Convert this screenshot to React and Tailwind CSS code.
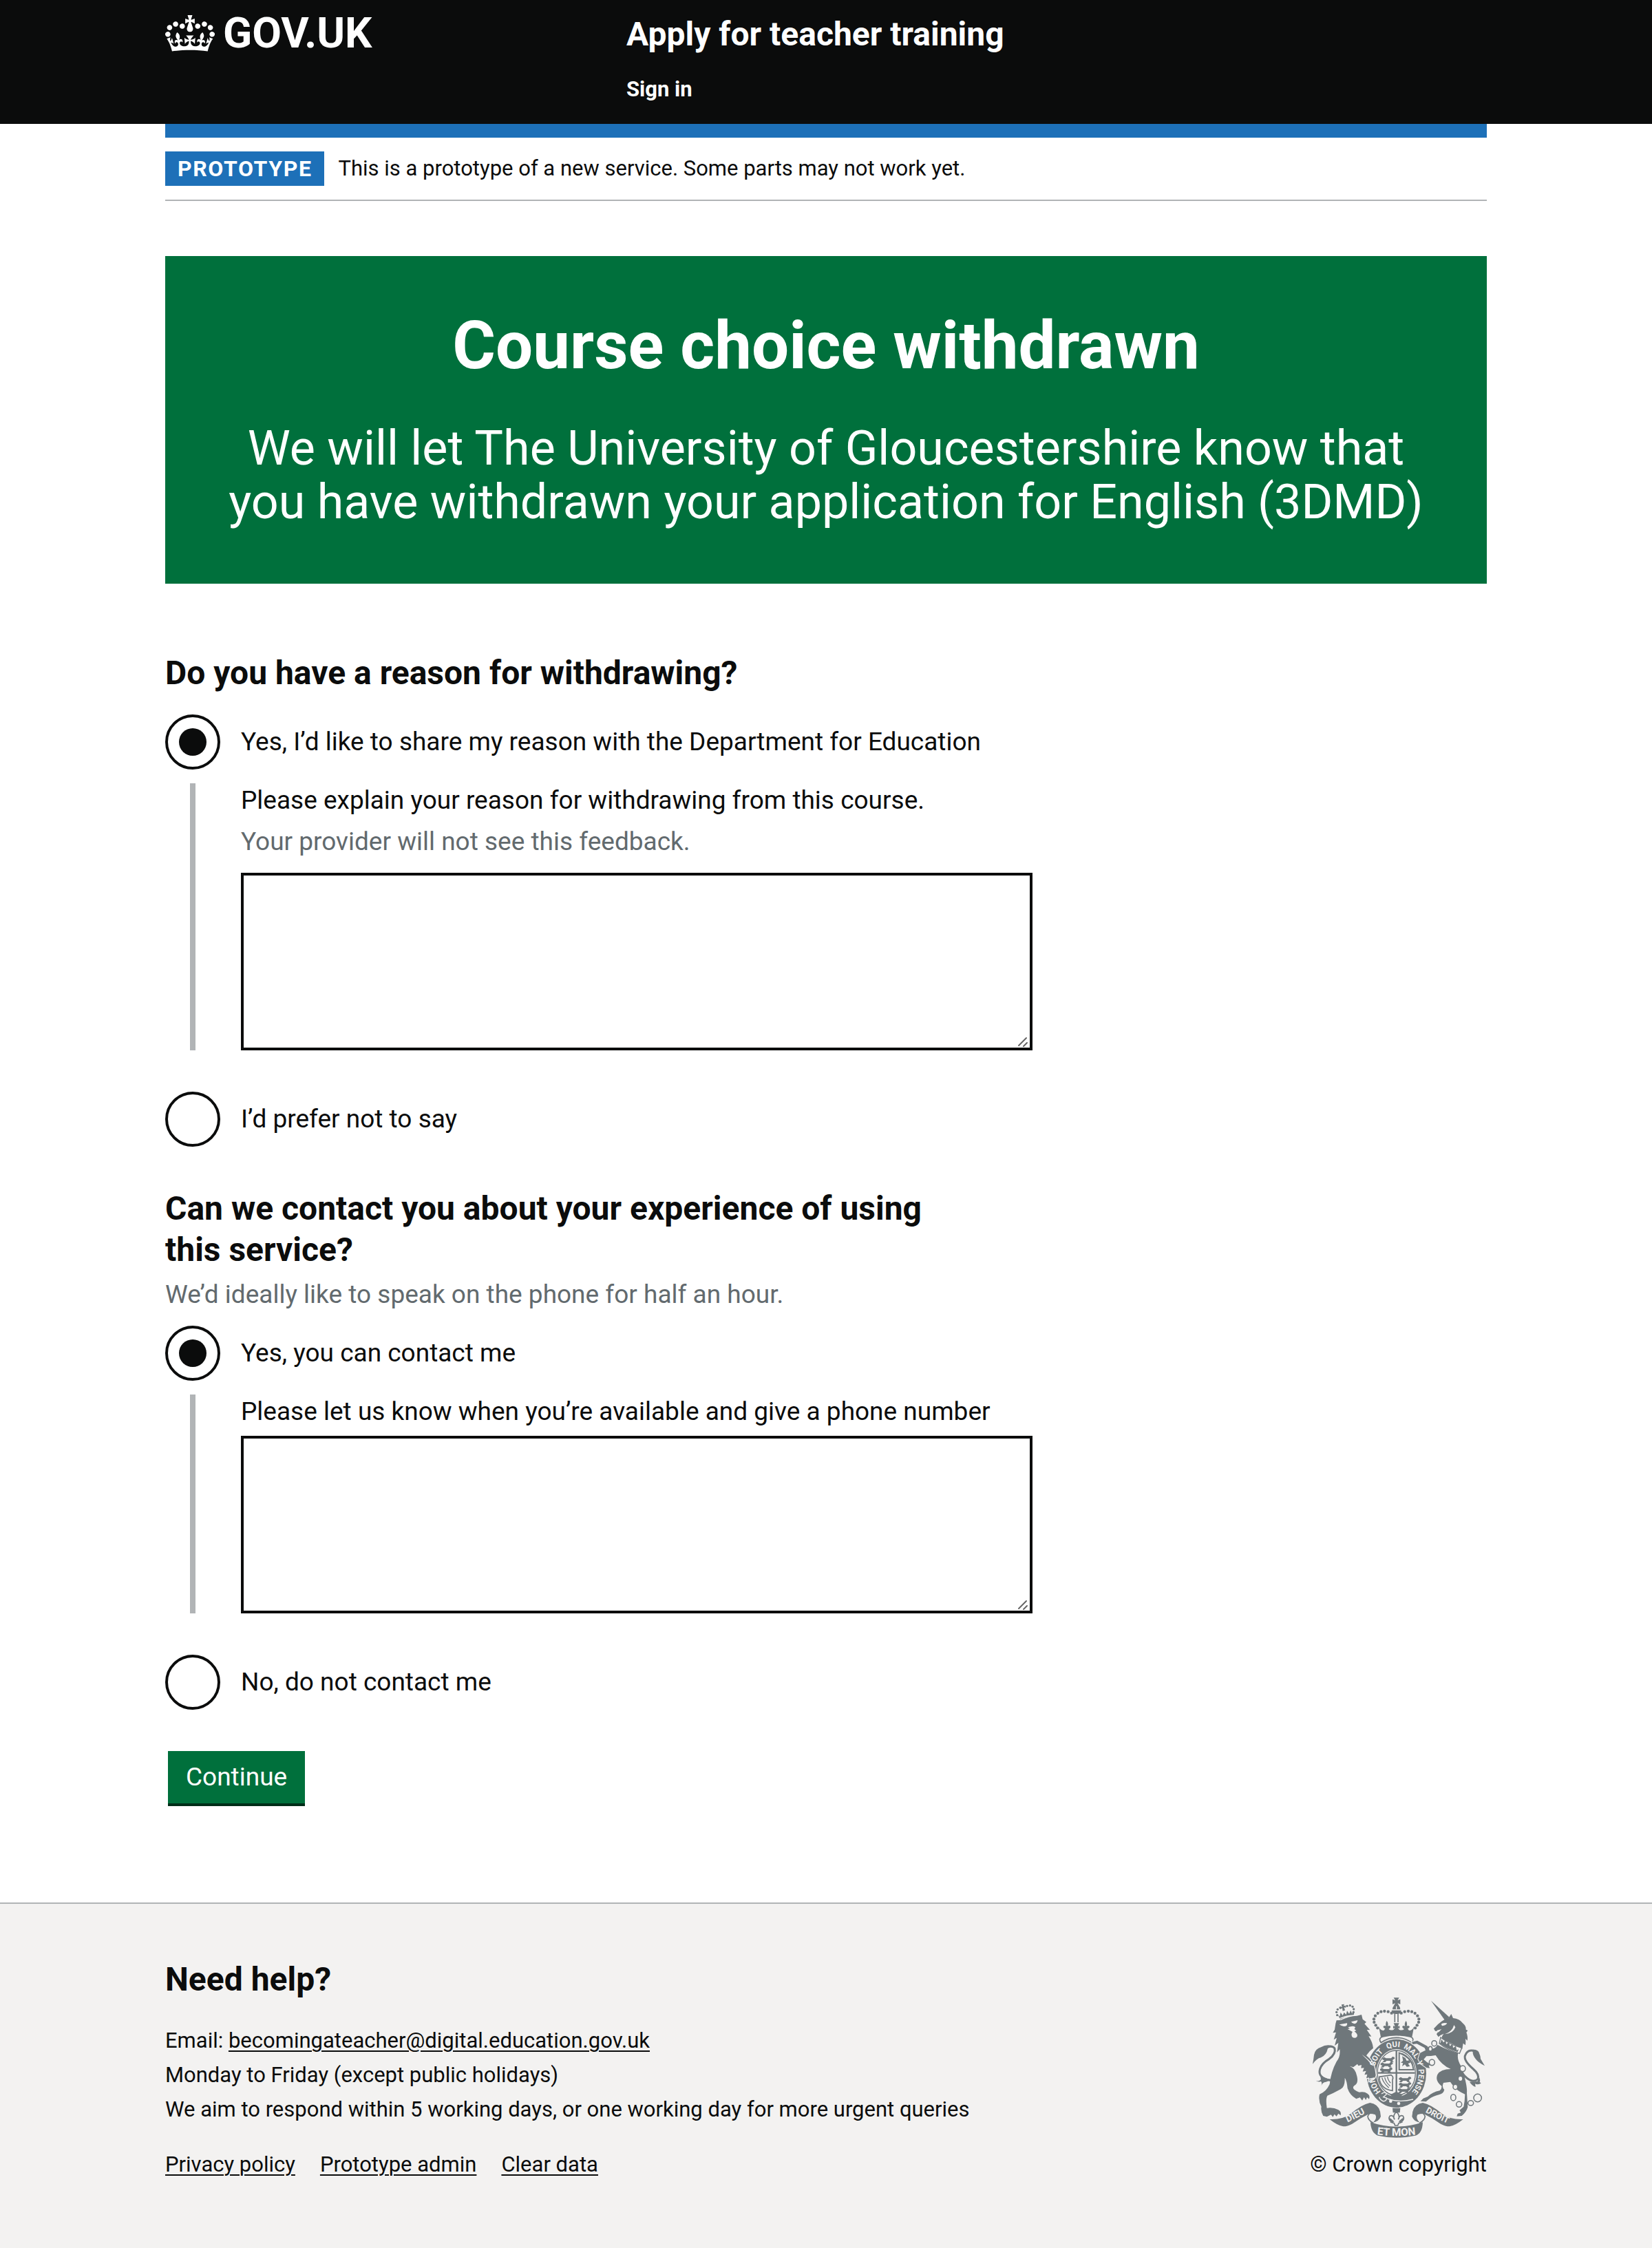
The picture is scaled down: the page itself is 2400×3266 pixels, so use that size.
import React from "react";

const INK = "#6f777b";
const PAPER = "#f3f2f1";

function CrownLogo() {
  return (
    <svg aria-hidden="true" viewBox="0 0 132 97" className="h-[53px] w-[72px] shrink-0" fill="currentColor">
      <path
        fillRule="evenodd"
        d="M25 30.2c3.5 1.5 7.7-.2 9.1-3.7 1.5-3.6-.2-7.8-3.9-9.2-3.6-1.4-7.6.3-9.1 3.9-1.4 3.5.3 7.5 3.9 9zM9 39.5c3.6 1.5 7.8-.2 9.2-3.7 1.5-3.6-.2-7.8-3.9-9.1-3.6-1.5-7.6.2-9.1 3.8-1.4 3.5.3 7.5 3.8 9zM4.4 57.2c3.5 1.5 7.7-.2 9.1-3.8 1.5-3.6-.2-7.7-3.9-9.1-3.5-1.5-7.6.3-9.1 3.8-1.4 3.5.3 7.6 3.9 9.1zm38.3-21.4c3.5 1.5 7.7-.2 9.1-3.8 1.5-3.6-.2-7.7-3.9-9.1-3.6-1.5-7.6.3-9.1 3.8-1.3 3.6.4 7.7 3.9 9.1zm64.4-5.6c-3.6 1.5-7.8-.2-9.1-3.7-1.5-3.6.2-7.8 3.8-9.2 3.6-1.4 7.7.3 9.2 3.9 1.3 3.5-.4 7.5-3.9 9zm15.9 9.3c-3.6 1.5-7.7-.2-9.1-3.7-1.5-3.6.2-7.8 3.7-9.1 3.6-1.5 7.7.2 9.2 3.8 1.5 3.5-.3 7.5-3.8 9zm4.7 17.7c-3.6 1.5-7.8-.2-9.2-3.8-1.5-3.6.2-7.7 3.9-9.1 3.6-1.5 7.7.3 9.2 3.8 1.3 3.5-.4 7.6-3.9 9.1zM89.3 35.8c-3.6 1.5-7.8-.2-9.2-3.8-1.4-3.6.2-7.7 3.9-9.1 3.6-1.5 7.7.3 9.2 3.8 1.4 3.6-.3 7.7-3.9 9.1zM69.7 17.7l8.9 4.7V9.3l-8.9 2.8c-.2-.3-.5-.6-.9-.9L72.4 0H59.6l3.5 11.2c-.3.3-.6.5-.9.9l-8.8-2.8v13.1l8.8-4.7c.3.3.6.7.9.9l-5 15.4v.1c-.2.8-.4 1.6-.4 2.4 0 4.1 3.1 7.5 7 8.1h.2c.3 0 .7.1 1 .1.4 0 .7 0 1-.1h.2c4-.6 7.1-4.1 7.1-8.1 0-.8-.1-1.7-.4-2.4V34l-5.1-15.4c.4-.2.7-.6 1-.9zM66 92.8c16.9 0 32.8 1.1 47.1 3.2 4-16.9 8.9-26.7 14-33.5l-9.6-3.4c1 4.9 1.1 7.2 0 10.2-1.5-1.4-3-4.3-4.2-8.7L108.6 76c2.8-2 5-3.2 7.5-3.3-4.4 9.4-10 11.9-13.6 11.2-4.3-.8-6.3-4.6-5.6-7.9 1-4.7 5.7-5.9 8-.5 4.3-8.7-3-11.4-7.6-8.8 7.1-7.2 7.9-13.5 2.1-21.1-8 6.1-8.1 12.3-4.5 20.8-4.7-5.4-12.1-2.5-9.5 6.2 3.4-5.2 7.9-2 7.2 3.1-.6 4.3-6.4 7.8-13.5 7.2-10.3-.9-10.9-8-11.2-13.8 2.5-.5 7.1 1.8 11 7.3L80.2 60c-4.1 4.4-8 5.3-12.3 5.4 1.4-4.4 8-11.6 8-11.6H55.5s6.4 7.2 7.9 11.6c-4.2-.1-8-1-12.3-5.4l1.4 16.4c3.9-5.5 8.5-7.7 10.9-7.3-.3 5.8-.9 12.8-11.1 13.8-7.2.6-12.9-2.9-13.5-7.2-.7-5 3.8-8.3 7.1-3.1 2.7-8.7-4.6-11.6-9.4-6.2 3.7-8.5 3.6-14.7-4.6-20.8-5.8 7.6-5 13.9 2.2 21.1-4.7-2.6-11.9.1-7.7 8.8 2.3-5.5 7.1-4.2 8.1.5.7 3.3-1.3 7.1-5.7 7.9-3.5.7-9-1.8-13.5-11.2 2.5.1 4.7 1.3 7.5 3.3l-4.7-15.4c-1.2 4.4-2.7 7.2-4.3 8.7-1.1-3-.9-5.3 0-10.2l-9.5 3.4c5 6.9 9.9 16.7 14 33.5 14.8-2.1 30.8-3.2 47.7-3.2z"
      />
    </svg>
  );
}

function Dots({ points, r }) {
  return points.map(([x, y]) => <circle key={`${x}-${y}`} cx={x} cy={y} r={r} />);
}

const ARCH = [
  [416, 134], [401, 128], [385, 126], [370, 128], [356, 135], [345, 146], [339, 160], [340, 174], [347, 187], [355, 199],
];
const MOTTO = [
  ["HON", "17%"], ["SOIT", "35%"], ["QUI", "48%"], ["MAL", "60%"], ["Y", "69%"], ["PENSE", "80.5%"],
];

function Lion() {
  return (
    <g>
      {/* crown */}
      <Dots r={5} points={[[179, 143], [176, 130], [181, 118], [192, 111], [222, 103], [235, 101], [246, 106], [251, 117], [250, 130]]} />
      <path d="M198 97l12-2-3 8 8-2 2 10-8-2 4 13-10 3-2-13-7 5-2-11 8 2z" />
      <path d="M182 141l8 8 4-18 9 14 6-14 9 10 4-17 9 13 7-15 5 13 10-6-3 27q-30 2-54 14z" />
      <path d="M190 158q30-13 62-14" fill="none" stroke={PAPER} strokeWidth="4" />
      {/* body */}
      <path
        stroke={PAPER}
        strokeWidth="8"
        paintOrder="stroke"
        d="M172 180l4-14 19-1q35-18 70-19l20-5 5 20 16 12-8 8 24 27-14-1 20 29-12-1q17 25 20 52-18 12-30 32 30 24 37 60l4 26q-6 22-19 17l-10 8v-15l-12 3 4-17-12 2 7-17-15 3 6-16-13 1 2-14-14 4-4-8-18 14-16-5q26 10 32 44 8 32-12 42-9 8 0 16 10 8 22 12 22-4 36 6 13 8 7 24l-9-8-5 12-8-12-8 14-10-13-16 6q-28-16-38-46-3-34-12-46 2 40-18 50-32 18-58 28-8 14-2 54 28-4 50 8 14 8 10 24l-10-8-8 12-9-9-7 12-8-10-18 9-16-4q-12-22-8-40-14-26-8-54 30-12 44-44 6-54 30-98 18-24 14-54l-12 14 6-42-16 12 9-34-13 8 10-32-14 2 8-14z"
      />
      {/* tail */}
      <path d="M152 428q-60-10-48-50 8-26 40-44 30-22 24-46-10-16-40-2" fill="none" stroke={INK} strokeWidth="9" />
      <path d="M158 276q-30-6-48 6-28 8-32 34-2 20-6 40 18-24 36-28 24-10 30-40z" />
      <path d="M86 428q14 6 22-4-2-16-4-28 14 26 50 26-12 10-24 12-16 2-20 16 4-14-2-18-12 4-22-4z" />
      {/* face */}
      <g fill={PAPER}>
        <path d="M188 184l34-6q4 14-14 14-10-2-20-8zM240 172l28-7q-2 14-14 16-10-1-14-9z" />
        <path d="M226 196q26-10 32 0l-4 8 8 6-8 4q16 12 12 22-10 12-22 2-6-12 2-22l-22-12 10-2z" />
        <path d="M286 314q30 20 50 46l-4 4q-18-26-46-50z" />
      </g>
    </g>
  );
}

function Unicorn() {
  return (
    <g>
      <path d="M588 80l80 72-18 16z" />
      {/* head and mane */}
      <path d="M600 202q16-20 34-32 14-10 30-14l12-18 8 18q28 2 42 22 16 14 14 28l8 4-6 8q8 22 4 36l-8-8q2 18 0 28l-10-8-4 24-88-44q-4-10 8-22l-14 6-10 8-8-12 8-12-14-2z" />
      <path d="M632 182q8-8 26-4-4 10-22 12zM612 210l22-6-14 14zM688 186q-8 30-40 40 36-2 46-30z" fill={PAPER} />
      {/* body, fore legs and hind legs */}
      <path
        stroke={PAPER}
        strokeWidth="6"
        paintOrder="stroke"
        d="M616 272q44 24 90 36-6 28 12 56 14 30 20 66 8 34 6 52l4 62q-6 22-26 38l-22 2 4-12 14-4-6-10 18-16 4-24 2-30q-30-12-50-34l-14-20-30 4q-8 20 4 30-4 18-24 22-34 8-56 30l-24-2 12-12 20-8q20-20 52-26 10-8 8-20-30-24-18-50 14-24 58-24-40-16-66-60-20 4-40 4l-12 14 14 12 22 12-14 2 4 12-14-2-26-18-10-20 8-26 24-12-4-10-34-18-18 2-4-10 24-6 44 24 8 12q26 2 34-14z"
      />
      {/* collar */}
      <path d="M630 240q40 32 92 46l-10 24q-54-16-88-44z" fill={PAPER} stroke={INK} strokeWidth="4" />
      <path d="M630 262l4-14 8 14 10-10 2 18 12-10 4 18 12-10 2 18 12-8 4 18 8-4-4 12q-46-14-78-38z" />
      {/* tail */}
      <path d="M724 396q40 50 68 26 8-20-20-44-42-36-36-58 10-28 36-22 18 4 26 30" fill="none" stroke={INK} strokeWidth="9" />
      <path d="M758 296q28-8 38 8 8 18 8 30l18 30q-30-16-38-28-16-20-14-34z" />
      <path d="M806 440q-16 8-26 2l2 14q-16-6-26-22l34-2 8-18q6 14 2 20z" />
      {/* chain */}
      <g fill={PAPER} stroke={INK} strokeWidth="4.5">
        <ellipse cx="602" cy="266" rx="11" ry="12" />
        <ellipse cx="585" cy="290" rx="8" ry="10" />
        <ellipse cx="592" cy="349" rx="12" ry="13" />
        <ellipse cx="726" cy="376" rx="12" ry="13" />
        <ellipse cx="716" cy="420" rx="10" ry="11" />
        <ellipse cx="694" cy="456" rx="10" ry="11" />
        <ellipse cx="685" cy="502" rx="11" ry="14" />
        <ellipse cx="710" cy="532" rx="12" ry="12" />
        <ellipse cx="761" cy="526" rx="12" ry="11" />
        <circle cx="791" cy="504" r="17" />
      </g>
    </g>
  );
}

function Passant({ x, y }) {
  return (
    <path
      transform={`translate(${x} ${y})`}
      d="M0 6l8-5 8 5h22l6-7 8 2 2 6-8 5-2 6 6 4-12 1-6-6H18l-6 6H0l8-8-8-3z"
    />
  );
}

function RoyalArms() {
  return (
    <svg role="img" aria-label="Royal coat of arms" viewBox="72 66 750 612" className="h-[204px] w-[250px]" fill={INK}>
      <defs>
        <path id="garter" d="M437 508A97 113 0 0 1 437 282A97 113 0 0 1 437 508" />
        <path id="ribbon-left" d="M208 618Q262 594 318 562" />
        <path id="ribbon-mid" d="M340 662Q437 676 534 662" />
        <path id="ribbon-right" d="M554 561Q612 594 668 619" />
      </defs>

      {/* garter and shield */}
      <ellipse cx="437" cy="397" rx="130" ry="149" />
      <ellipse cx="437" cy="395" rx="88" ry="104" fill={PAPER} />
      <ellipse cx="437" cy="395" rx="83" ry="98" fill="none" stroke={INK} strokeWidth="4" />
      <path d="M356 395h162M437 297v196" stroke={INK} strokeWidth="7" />
      <Passant x={376} y={325} />
      <Passant x={368} y={348} />
      <Passant x={366} y={372} />
      <Passant x={448} y={412} />
      <Passant x={448} y={436} />
      <Passant x={444} y={460} />
      <path d="M446 304q40 6 62 46l8 34h-70zM452 312v66h56q-4-44-56-66z" fillRule="evenodd" />
      <path d="M462 322l14 8 6 12 12-2 4 10-10 4 8 12-14 2-8-10-12 8 4-14-10-2 10-8z" />
      <path d="M362 412l52-8q12 8 6 20v48q-46-6-56-44z" fill="none" stroke={INK} strokeWidth="5" />
      <path d="M374 416q6 22 30 44M386 414q4 22 24 38M398 411q2 16 14 28" fill="none" stroke={INK} strokeWidth="4" />
      <path d="M410 490l27-14 27 14-10 12h-34z" />
      {/* garter buckle and strap */}
      <path d="M384 502q60 26 126 8" fill="none" stroke={PAPER} strokeWidth="4" />
      <path d="M372 486q16-12 22 2l-14 12 14 4q0 16-16 14-14-8-16-18" fill={INK} stroke={PAPER} strokeWidth="4" />
      <circle cx="412" cy="518" r="7" fill={PAPER} />
      <circle cx="447" cy="528" r="7" fill={PAPER} />

      {/* crown */}
      <path d="M425 67h24l-7 12 12-5v22l-12-5 7 12h-24l7-12-12 5v-22l12 5z" />
      <path d="M420 118q0-18 17-18t17 18zM416 122h42q-2 14-14 16h-14q-12-2-14-16z" />
      <path d="M437 104v14" stroke={PAPER} strokeWidth="4" />
      <path d="M430 138v36M444 138v36" stroke={INK} strokeWidth="5" />
      <Dots r={6.5} points={ARCH} />
      <Dots r={6.5} points={ARCH.map(([x, y]) => [874 - x, y])} />
      <path d="M360 192q6 18 22 18l6-8q-10-4-8-10 8-6 12 0-4-14 3-24 9 10 4 24 6-6 12 0 2 8-8 12 10 8 22 2l6-8-8 4v-12l8 2-6-14h24l-6 14 8-2v12l-8-4 6 8q12 6 22-2-10-4-8-12 6-6 12 0-5-14 4-24 7 10 3 24 4-6 12 0 2 6-8 10l6 8q16 0 22-18l-10 52H370z" />
      <path d="M370 263q-14-20 8-26 59-14 118 0 22 6 8 26-30-22-67-22t-67 22z" fill={PAPER} stroke={INK} strokeWidth="5" />

      <Lion />
      <Unicorn />

      {MOTTO.map(([word, offset]) => (
        <text key={word} fill={PAPER} fontSize="34" fontWeight="700" textAnchor="middle">
          <textPath href="#garter" startOffset={offset}>{word}</textPath>
        </text>
      ))}

      {/* fleur de lis under the garter */}
      <path d="M420 548h34l-2 20h-30z" />
      <path d="M437 564q18 18 8 34 6-22 20-16 10 14-6 26l6-14-14 12 8 4-12 4-4 10h-12l-4-10-12-4 8-4-14-12 6 14q-16-12-6-26 14-6 20 16-10-16 8-34z" fill={PAPER} stroke={INK} strokeWidth="5" />

      {/* ribbon */}
      <path d="M366 568q-46-10-54 16 2 18 22 28 6 36 20 50M508 568q46-10 54 16-2 18-22 28-6 36-20 50" fill="none" stroke={INK} strokeWidth="5" />
      <path id="ribbon-end" d="M146 597Q200 600 238 573Q285 533 322 525Q358 531 366 563L369 585Q361 607 335 611Q355 593 345 577Q331 572 318 573Q280 592 244 617Q225 628 205 628Q180 624 146 597z" />
      <use href="#ribbon-end" transform="translate(874 0) scale(-1 1)" />
      <path d="M324 610q113 38 228 0-2 50-32 58-83 18-164 0-30-12-32-58z" />
      <g fill={PAPER} fontWeight="700" textAnchor="middle">
        <text fontSize="40"><textPath href="#ribbon-left" startOffset="50%">DIEU</textPath></text>
        <text fontSize="46"><textPath href="#ribbon-mid" startOffset="50%">ET MON</textPath></text>
        <text fontSize="38"><textPath href="#ribbon-right" startOffset="50%">DROIT</textPath></text>
      </g>
    </svg>
  );
}

function Radio({ id, name, label, defaultChecked }) {
  return (
    <div className="flex items-center">
      <input
        type="radio"
        id={id}
        name={name}
        defaultChecked={defaultChecked}
        className="grid size-20 shrink-0 appearance-none place-content-center rounded-full border-4 border-[#0b0c0c] bg-white before:size-10 before:rounded-full before:content-[''] checked:before:bg-[#0b0c0c]"
      />
      <label htmlFor={id} className="px-[30px] leading-[50px]">{label}</label>
    </div>
  );
}

function Conditional({ id, label, hint }) {
  return (
    <div className="mt-5 mb-[60px] ml-9 border-l-8 border-[#b1b4b6] pl-[66px]">
      <label htmlFor={id} className="block leading-[50px]">{label}</label>
      {hint && <p id={`${id}-hint`} className="mt-[10px] mb-5 leading-[50px] text-[#626a6e]">{hint}</p>}
      <div className={hint ? "relative" : "relative mt-[10px]"}>
        <textarea
          id={id}
          aria-describedby={hint ? `${id}-hint` : undefined}
          className="block h-[258px] w-full resize-none border-4 border-[#0b0c0c] bg-white p-[10px]"
        />
        <svg aria-hidden="true" viewBox="0 0 16 16" className="absolute right-[6px] bottom-[4px] size-4" stroke="#666" strokeWidth="2" strokeLinecap="round">
          <path d="M2 13L13 2M9 14L14 9" />
        </svg>
      </div>
    </div>
  );
}

const legendClass = "max-w-[1160px] text-[48px] leading-[60px] font-bold";
const linkClass = "underline decoration-2 underline-offset-4";

export default function App() {
  return (
    <div className="bg-white font-[Roboto,sans-serif] text-[37px] text-[#0b0c0c]">
      <header className="bg-[#0b0c0c] text-white">
        <div className="mx-auto flex h-[180px] w-4/5 max-w-[1920px]">
          <div className="w-[670px] shrink-0 pt-[18px]">
            <a href="#" className="flex items-center gap-3 text-[62px] leading-[60px] font-bold">
              <CrownLogo />
              <span>GOV.UK</span>
            </a>
          </div>
          <div className="pt-5">
            <a href="#" className="block text-[48px] leading-[60px] font-bold">Apply for teacher training</a>
            <nav className="mt-[30px]">
              <a href="#" className="block text-[31px] leading-[40px] font-bold">Sign in</a>
            </nav>
          </div>
        </div>
      </header>

      <div className="mx-auto w-4/5 max-w-[1920px]">
        <div className="h-5 bg-[#1d70b8]" />
        <div className="flex items-center gap-5 border-b-2 border-[#b1b4b6] py-5 text-[31px]">
          <strong className="bg-[#1d70b8] px-[18px] text-[32px] leading-[50px] font-bold tracking-wider text-white uppercase">Prototype</strong>
          <span className="leading-[50px]">This is a prototype of a new service. Some parts may not work yet.</span>
        </div>

        <main className="pt-20 pb-36">
          <div className="bg-[#00703c] p-20 text-center text-white">
            <h1 className="text-[96px] leading-[100px] font-bold">Course choice withdrawn</h1>
            <p className="mt-[60px] text-[70px] leading-[78px]">
              We will let The University of Gloucestershire know that you have withdrawn your application for English (3DMD)
            </p>
          </div>

          <form className="mt-[100px] max-w-[1260px]">
            <fieldset>
              <legend className={`${legendClass} mb-[30px]`}>Do you have a reason for withdrawing?</legend>
              <Radio id="reason-yes" name="reason" defaultChecked label="Yes, I’d like to share my reason with the Department for Education" />
              <Conditional id="reason-text" label="Please explain your reason for withdrawing from this course." hint="Your provider will not see this feedback." />
              <Radio id="reason-no" name="reason" label="I’d prefer not to say" />
            </fieldset>

            <fieldset className="mt-[60px]" aria-describedby="contact-hint">
              <legend className={legendClass}>Can we contact you about your experience of using this service?</legend>
              <p id="contact-hint" className="mt-[10px] mb-5 leading-[50px] text-[#626a6e]">We’d ideally like to speak on the phone for half an hour.</p>
              <Radio id="contact-yes" name="contact" defaultChecked label="Yes, you can contact me" />
              <Conditional id="contact-text" label="Please let us know when you’re available and give a phone number" />
              <Radio id="contact-no" name="contact" label="No, do not contact me" />
            </fieldset>

            <button type="button" className="mt-[60px] ml-1 block bg-[#00703c] px-[26px] leading-[76px] text-white shadow-[0_4px_0_#002d18]">
              Continue
            </button>
          </form>
        </main>
      </div>

      <footer className="border-t-2 border-[#b1b4b6] bg-[#f3f2f1] pt-20 pb-24 text-[31px] leading-[50px]">
        <div className="mx-auto flex w-4/5 max-w-[1920px] items-end justify-between">
          <div>
            <h2 className="text-[48px] leading-[60px] font-bold">Need help?</h2>
            <ul className="mt-[34px]">
              <li>Email: <a href="mailto:becomingateacher@digital.education.gov.uk" className={linkClass}>becomingateacher@digital.education.gov.uk</a></li>
              <li>Monday to Friday (except public holidays)</li>
              <li>We aim to respond within 5 working days, or one working day for more urgent queries</li>
            </ul>
            <ul className="mt-[30px] flex gap-9">
              <li><a href="#" className={linkClass}>Privacy policy</a></li>
              <li><a href="#" className={linkClass}>Prototype admin</a></li>
              <li><a href="#" className={linkClass}>Clear data</a></li>
            </ul>
          </div>
          <div className="flex flex-col items-center gap-[14px]">
            <RoyalArms />
            <a href="#">© Crown copyright</a>
          </div>
        </div>
      </footer>
    </div>
  );
}
